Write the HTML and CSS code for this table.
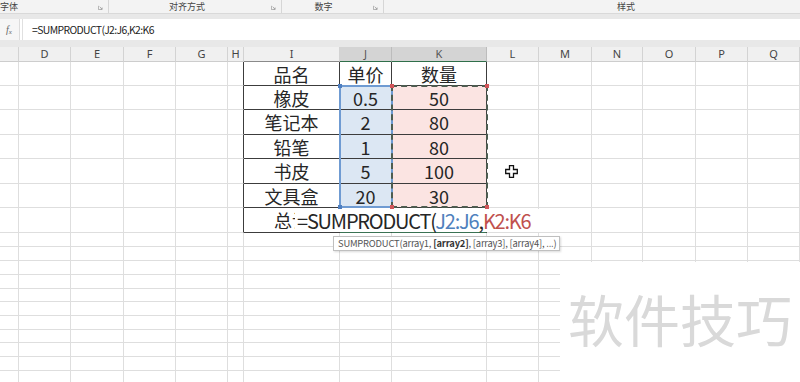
FILE: index.html
```html
<!DOCTYPE html>
<html>
<head>
<meta charset="utf-8">
<link rel="stylesheet" href="styles.css">
</head>
<body>
<div class="ribbon">
  <div class="grp g1">字体<svg class="launch" viewBox="0 0 6 6"><path d="M0.5 1v4.5h4.5M2 2l3 3M3 5h2v-2"/></svg></div>
  <div class="grp g2">对齐方式<svg class="launch" viewBox="0 0 6 6"><path d="M0.5 1v4.5h4.5M2 2l3 3M3 5h2v-2"/></svg></div>
  <div class="grp g3">数字<svg class="launch" viewBox="0 0 6 6"><path d="M0.5 1v4.5h4.5M2 2l3 3M3 5h2v-2"/></svg></div>
  <div class="grp g4">样式</div>
</div>
<div class="band"></div>
<div class="fbar">
  <div class="fx">f<sub>x</sub></div>
  <div class="finput">=SUMPRODUCT(J2:J6,K2:K6</div>
</div>
<div class="band2"></div>
<div class="sheet">
  <div class="h"></div><div class="h">D</div><div class="h">E</div><div class="h">F</div><div class="h">G</div><div class="h">H</div><div class="h hi">I</div><div class="h hs">J</div><div class="h hs">K</div><div class="h">L</div><div class="h">M</div><div class="h">N</div><div class="h">O</div><div class="h">P</div><div class="h">Q</div>

  <i></i><i></i><i></i><i></i><i></i><i class="tl"></i><div class="t">品名</div><div class="t">单价</div><div class="t">数量</div><i></i><i></i><i></i><i></i><i></i><i></i>
  <i></i><i></i><i></i><i></i><i></i><i class="tl"></i><div class="t">橡皮</div><div class="t jb">0.5</div><div class="t kb">50</div><i></i><i></i><i></i><i></i><i></i><i></i>
  <i></i><i></i><i></i><i></i><i></i><i class="tl"></i><div class="t">笔记本</div><div class="t jb">2</div><div class="t kb">80</div><i></i><i></i><i></i><i></i><i></i><i></i>
  <i></i><i></i><i></i><i></i><i></i><i class="tl"></i><div class="t">铅笔</div><div class="t jb">1</div><div class="t kb">80</div><i></i><i></i><i></i><i></i><i></i><i></i>
  <i></i><i></i><i></i><i></i><i></i><i class="tl"></i><div class="t">书皮</div><div class="t jb">5</div><div class="t kb">100</div><i></i><i></i><i></i><i></i><i></i><i></i>
  <i></i><i></i><i></i><i></i><i></i><i class="tl"></i><div class="t">文具盒</div><div class="t jb">20</div><div class="t kb">30</div><i></i><i></i><i></i><i></i><i></i><i></i>
  <i></i><i></i><i></i><i></i><i></i><i class="tl"></i><div class="t tsum"><span class="clip">总计</span></div><div class="t tg"></div><div class="t tg"></div><i></i><i></i><i></i><i></i><i></i><i></i>

  <i></i><i></i><i></i><i></i><i></i><i></i><i></i><i></i><i></i><i></i><i></i><i></i><i></i><i></i><i></i>
  <i></i><i></i><i></i><i></i><i></i><i></i><i></i><i></i><i></i><i></i><i></i><i></i><i></i><i></i><i></i>
  <i></i><i></i><i></i><i></i><i></i><i></i><i></i><i></i><i></i><i></i><i></i><i></i><i></i><i></i><i></i>
  <i></i><i></i><i></i><i></i><i></i><i></i><i></i><i></i><i></i><i></i><i></i><i></i><i></i><i></i><i></i>
  <i></i><i></i><i></i><i></i><i></i><i></i><i></i><i></i><i></i><i></i><i></i><i></i><i></i><i></i><i></i>
  <i></i><i></i><i></i><i></i><i></i><i></i><i></i><i></i><i></i><i></i><i></i><i></i><i></i><i></i><i></i>
  <i></i><i></i><i></i><i></i><i></i><i></i><i></i><i></i><i></i><i></i><i></i><i></i><i></i><i></i><i></i>
  <i></i><i></i><i></i><i></i><i></i><i></i><i></i><i></i><i></i><i></i><i></i><i></i><i></i><i></i><i></i>
  <i></i><i></i><i></i><i></i><i></i><i></i><i></i><i></i><i></i><i></i><i></i><i></i><i></i><i></i><i></i>
  <i></i><i></i><i></i><i></i><i></i><i></i><i></i><i></i><i></i><i></i><i></i><i></i><i></i><i></i><i></i>
  <i></i><i></i><i></i><i></i><i></i><i></i><i></i><i></i><i></i><i></i><i></i><i></i><i></i><i></i><i></i>

  <div class="rng-j"></div>
  <div class="rng-k"></div>
  <b class="hd hb h1"></b><b class="hd hb h2"></b>
  <b class="hd hr h3"></b><b class="hd hr h4"></b><b class="hd hr h5"></b><b class="hd hr h6"></b>
  <div class="edit">=SUMPRODUCT(<span class="rj">J2:J6</span>,<span class="rk">K2:K6</span></div>
  <div class="tip">SUMPRODUCT(array1, <b>[array2]</b>, [array3], [array4], ...)</div>
  <svg class="cursor" viewBox="0 0 13 13"><path d="M4.5 0.7h4v3.8h3.8v4h-3.8v3.8h-4v-3.8h-3.8v-4h3.8z"/></svg>
  <div class="wm">软件技巧</div>
</div>
</body>
</html>
```

FILE: styles.css
```css
html, body {
  margin: 0;
  padding: 0;
}
body {
  width: 800px;
  height: 382px;
  overflow: hidden;
  background: #fff;
  font-family: "Noto Sans CJK SC", "Noto Sans", sans-serif;
  color: #262626;
}
.ribbon {
  display: flex;
  height: 13px;
  background: #f3f3f3;
  font-size: 9px;
  line-height: 13px;
  color: #444;
}
.grp {
  position: relative;
  box-sizing: border-box;
  border-right: 1px solid #d6d6d6;
  text-align: center;
  white-space: nowrap;
}
.g1 { width: 109px; text-align: left; }
.g2 { width: 173px; padding-right: 16px; }
.g3 { width: 102px; padding-right: 18px; }
.g4 { flex: 1; padding-left: 68px; border-right: 0; }
.launch {
  position: absolute;
  right: 5px;
  top: 5px;
  width: 5px;
  height: 5px;
  fill: none;
  stroke: #9a9a9a;
  stroke-width: 0.9;
}
.band {
  height: 5px;
  background: #e8e8e8;
  border-top: 1px solid #d9d9d9;
}
.fbar {
  display: flex;
  height: 21px;
  background: #fff;
}
.fx {
  width: 20px;
  box-sizing: border-box;
  background: #f6f6f6;
  border-right: 1px solid #dcdcdc;
  font-family: "Liberation Serif", serif;
  font-style: italic;
  font-size: 10px;
  color: #666;
  line-height: 21px;
  padding-left: 6px;
}
.fx sub {
  font-size: 7px;
  vertical-align: -1px;
}
.finput {
  flex: 1;
  margin-left: 2px;
  border-left: 1px solid #e0e0e0;
  padding-left: 9px;
  font-size: 10.4px;
  letter-spacing: -0.6px;
  line-height: 21px;
  color: #222;
}
.band2 {
  height: 7px;
  background: #e8e8e8;
}
.sheet {
  position: relative;
  display: grid;
  grid-template-columns: 19px 52px 53px 52px 52px 16px 96px 52px 95px 52px 53px 51px 53px 52px 52px;
  grid-template-rows: 15px 24px 24px 25px 24px 25px 24px 25px 14px 14px 14px 14px 13px 14px 14px 13px 14px 14px 14px;
}
.sheet > i, .sheet > .h, .sheet > .t {
  box-sizing: border-box;
  display: block;
  border-right: 1px solid #dedede;
  border-bottom: 1px solid #dedede;
}
.sheet > .h {
  background: #f0f0f0;
  border-right-color: #d3d3d3;
  border-bottom-color: #cdcdcd;
  font-family: "Noto Sans", sans-serif;
  font-size: 11px;
  line-height: 14px;
  text-align: center;
  color: #444;
}
.sheet > .hi { border-bottom-color: #8a8a8a; }
.sheet > .hs {
  background: #d4d4d4;
  border-right-color: #bcbcbc;
  border-bottom: 1px solid #2f6f4a;
  color: #555;
}
.sheet > .tl { border-right-color: #3c3c3c; }
.sheet > .t {
  border-right-color: #3c3c3c;
  border-bottom-color: #3c3c3c;
  display: flex;
  align-items: center;
  justify-content: center;
  font-size: 18px;
  line-height: 1;
  color: #262626;
}
.sheet > .tsum {
  justify-content: flex-start;
  padding-left: 30px;
}
.clip {
  display: block;
  width: 21px;
  overflow: hidden;
  white-space: nowrap;
}
.sheet > .jb { background: #dce7f3; }
.sheet > .kb { background: #fbe4e2; }
.sheet > .tg { border-bottom-color: #3a7253; }
.rng-j {
  position: absolute;
  left: 339px;
  top: 38px;
  width: 54px;
  height: 123px;
  box-sizing: border-box;
  border: 2px solid #6f9bd2;
}
.rng-k {
  position: absolute;
  left: 391px;
  top: 38px;
  width: 97px;
  height: 123px;
  box-sizing: border-box;
  border: 2px dashed #4d5c50;
}
.hd {
  position: absolute;
  width: 4px;
  height: 4px;
}
.hb { background: #4f7fc0; }
.hr { background: #d2555a; }
.h1 { left: 338px; top: 37px; }
.h2 { left: 338px; top: 158px; }
.h3 { left: 390px; top: 37px; }
.h4 { left: 485px; top: 37px; }
.h5 { left: 390px; top: 158px; }
.h6 { left: 485px; top: 158px; }
.edit {
  position: absolute;
  left: 295px;
  top: 162px;
  width: 244px;
  height: 23px;
  background: #fff;
  box-sizing: border-box;
  padding-left: 2px;
  font-size: 20px;
  letter-spacing: -1.2px;
  line-height: 23px;
  color: #262626;
  white-space: nowrap;
}
.rj { color: #4f81bd; }
.rk { color: #c0504d; }
.tip {
  position: absolute;
  left: 333px;
  top: 189px;
  width: 227px;
  height: 15px;
  box-sizing: border-box;
  border: 1px solid #bfbfbf;
  background: #fff;
  box-shadow: 1px 1px 2px rgba(0,0,0,0.15);
  font-family: "Noto Sans CJK SC", "Noto Sans", sans-serif;
  font-size: 9.4px;
  letter-spacing: -0.2px;
  line-height: 13px;
  color: #555;
  padding-left: 4px;
  white-space: nowrap;
}
.tip b { color: #333; }
.cursor {
  position: absolute;
  left: 505px;
  top: 118px;
  width: 13px;
  height: 13px;
  fill: #fff;
  stroke: #111;
  stroke-width: 1.3;
}
.wm {
  position: absolute;
  left: 560px;
  top: 215px;
  right: 0;
  bottom: 0;
  background: #fff;
  box-sizing: border-box;
  padding: 28px 0 0 8px;
  font-size: 56px;
  line-height: 1;
  color: #d9d9d9;
  white-space: nowrap;
}
```
